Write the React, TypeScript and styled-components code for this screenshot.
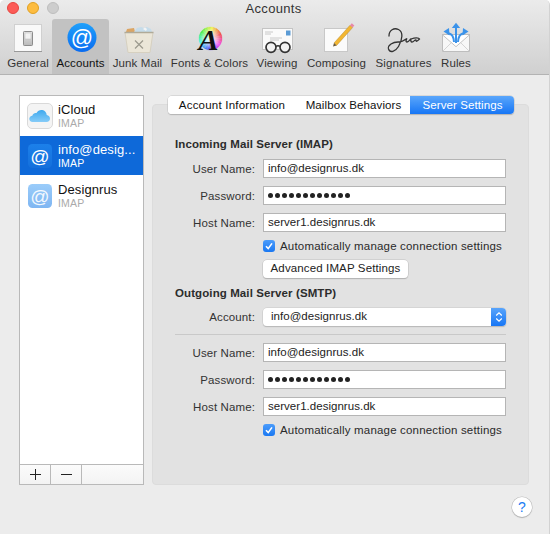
import React from "react";
import styled, { createGlobalStyle } from "styled-components";

const Global = createGlobalStyle`
  html, body { margin: 0; padding: 0; background: #fff; }
  * { box-sizing: border-box; }
`;

const Win = styled.div`
  width: 550px; height: 534px; background: #ececec; border-radius: 5px 5px 0 0;
  border-right: 1px solid #d2d2d2;
  overflow: hidden; display: flex; flex-direction: column; position: relative;
  font-family: "Liberation Sans", Arial, sans-serif; color: #222; font-size: 12px;
`;
const Chrome = styled.header`
  height: 75px; flex: none; border-bottom: 1px solid #b3b3b3;
  background: linear-gradient(#ebebeb, #d0d0d0);
  display: flex; flex-direction: column;
`;
const TitleBar = styled.div`
  height: 19px; flex: none; display: flex; align-items: center; padding-left: 7px; gap: 8px; position: relative;
`;
const Light = styled.span<{ $c: string; $b: string }>`
  width: 12px; height: 12px; border-radius: 50%; background: ${p => p.$c}; border: 1px solid ${p => p.$b};
  margin-top: -3px;
`;
const Title = styled.div`
  position: absolute; left: 0; right: 2px; top: 1px; text-align: center; font-size: 13px; color: #333; letter-spacing: .3px; line-height: 15px;
`;
const Tools = styled.nav`
  flex: 1; display: flex; padding-left: 4px;
`;
const Tool = styled.div<{ $w: number; $on?: boolean }>`
  width: ${p => p.$w}px; flex: none; display: flex; flex-direction: column; align-items: center;
  background: ${p => (p.$on ? "#c2c2c2" : "transparent")}; border-radius: 3px 3px 0 0;
  white-space: nowrap; font-size: 11.5px; letter-spacing: .1px; color: ${p => (p.$on ? "#111" : "#333")};
  svg { display: block; width: 36px; height: 36px; flex: none; }
  span { margin-top: 1px; line-height: 14px; }
`;
const Body = styled.main`
  flex: 1; display: flex; align-items: flex-start; padding: 20px 21px 0 19px; gap: 8px;
`;
const Side = styled.aside`
  width: 125px; height: 390px; flex: none; border: 1px solid #b9b9b9; background: #fff;
  display: flex; flex-direction: column;
`;
const List = styled.div`flex: 1;`;
const Acc = styled.div<{ $on?: boolean }>`
  height: 40px; display: flex; align-items: center; gap: 5px; padding-left: 7px;
  background: ${p => (p.$on ? "#0e69d9" : "transparent")}; color: ${p => (p.$on ? "#fff" : "#111")};
  box-shadow: inset 0 -1px #fff;
  svg { width: 26px; height: 26px; flex: none; display: block; }
`;
const AccText = styled.div`
  display: flex; flex-direction: column; margin-top: -1px;
  b { font-weight: 400; font-size: 13px; line-height: 15px; letter-spacing: .1px; }
  i { font-style: normal; font-size: 10.5px; line-height: 12px; letter-spacing: .2px; }
`;
const Sub = styled.i<{ $on?: boolean }>`color: ${p => (p.$on ? "#fff" : "#aaa")};`;
const SideBar = styled.div`
  height: 20px; flex: none; display: flex; border-top: 1px solid #b9b9b9;
  background: linear-gradient(#fbfbfb, #f3f3f3);
`;
const SideBtn = styled.div`
  width: 31px; flex: none; border-right: 1px solid #b9b9b9; display: flex; align-items: center; justify-content: center;
  svg { width: 11px; height: 11px; display: block; }
`;
const Panel = styled.section`
  width: 377px; height: 381px; margin-top: 9px; background: #e2e2e2; border: 1px solid #dcdcdc; border-radius: 4px;
  position: relative; padding: 32px 22px 0 22px; display: flex; flex-direction: column;
`;
const Tabs = styled.div`
  position: absolute; left: 15px; top: -9px; width: 346px; height: 18px; display: flex; background: #fff;
  border-radius: 4px; box-shadow: 0 0 0 .5px #c4c4c4, 0 1px 1px #a8a8a8; overflow: hidden;
`;
const TabBtn = styled.div<{ $w: number; $on?: boolean; $ls?: number }>`
  width: ${p => p.$w}px; flex: none; text-align: center; line-height: 18px; font-size: 11.5px; letter-spacing: ${p => p.$ls ?? 0.1}px;
  color: ${p => (p.$on ? "#fff" : "#111")};
  background: ${p => (p.$on ? "linear-gradient(#5aa6fb, #1776f5)" : "#fff")};
  & + & { border-left: 1px solid ${p => (p.$on ? "transparent" : "#e2e2e2")}; }
`;
const Head = styled.h3<{ $mt?: number }>`
  margin: ${p => p.$mt ?? 0}px 0 0; font-size: 11.5px; font-weight: 700; color: #2c2c2c; letter-spacing: .1px; line-height: 14px;
`;
const Row = styled.div<{ $mt?: number }>`
  display: grid; grid-template-columns: 80px 243px; column-gap: 8px; align-items: center; margin-top: ${p => p.$mt ?? 8}px;
`;
const Label = styled.label`
  text-align: right; font-size: 11.5px; letter-spacing: .12px; color: #333;
`;
const Field = styled.div`
  height: 19px; background: #fff; border: 1px solid #b5b5b5; padding-left: 4px;
  font-size: 11.5px; letter-spacing: .03px; color: #222; line-height: 17px; white-space: nowrap;
`;
const Dots = styled.div`
  display: flex; gap: 2px; align-items: center; height: 100%;
  span { width: 5px; height: 5px; background: #222; border-radius: 50%; flex: none; }
`;
const CheckText = styled.div`
  display: flex; align-items: center; gap: 5px; height: 14px; font-size: 11.5px; letter-spacing: .18px; color: #2a2a2a; white-space: nowrap;
`;
const Check = styled.span`
  width: 12px; height: 12px; border-radius: 3px; background: linear-gradient(#4b9cfb, #1a78f2); display: flex; align-items: center; justify-content: center;
  svg { width: 10px; height: 10px; display: block; }
`;
const Btn = styled.div`
  width: 145px; height: 18px; background: #fff; border-radius: 4px; text-align: center; line-height: 17px;
  font-size: 11.5px; letter-spacing: .13px; color: #222; box-shadow: 0 0 0 .5px #c0c0c0, 0 1px 1px #a8a8a8;
`;
const Select = styled.div`
  height: 18px; background: #fff; border-radius: 4px; box-shadow: 0 0 0 .5px #c8c8c8, 0 1px 1px #aaa; display: flex; overflow: hidden;
  font-size: 11.5px; letter-spacing: .03px; line-height: 17px; color: #222; padding-left: 8px; justify-content: space-between;
`;
const Stepper = styled.span`
  width: 15px; flex: none; background: linear-gradient(#58a4fb, #1776f5); display: flex; align-items: center; justify-content: center;
  svg { width: 8px; height: 12px; display: block; }
`;
const Rule = styled.hr`
  margin: 8px 0 0; border: 0; border-top: 1px solid #c9c9c9; width: 331px;
`;
const Help = styled.div`
  position: absolute; left: 512px; top: 497px; width: 20px; height: 20px; border-radius: 50%; background: #fff;
  box-shadow: 0 0 0 .5px #bbb, 0 1px 1px #aaa; color: #1a7cf3; text-align: center; font-size: 14px; line-height: 20px;
`;

const atFont = '"Liberation Sans", Arial, sans-serif';

const AtBadge = ({ id, from, to, dim }: { id: string; from: string; to: string; dim?: boolean }) => (
  <svg viewBox="0 0 26 26">
    <defs>
      <linearGradient id={id} x1="0" y1="0" x2="0" y2="1"><stop offset="0" stopColor={from} /><stop offset="1" stopColor={to} /></linearGradient>
    </defs>
    <rect x="1" y="1" width="24" height="24" rx="4.5" fill={`url(#${id})`} />
    <text x="13" y="19.5" textAnchor="middle" fontFamily={atFont} fontSize="19" fill="#fff" opacity={dim ? 0.9 : 1}>@</text>
  </svg>
);

const CloudBadge = () => (
  <svg viewBox="0 0 26 26">
    <defs>
      <linearGradient id="cl" x1="0" y1="0" x2="0" y2="1"><stop offset="0" stopColor="#3fa9ee" /><stop offset="1" stopColor="#86ccf8" /></linearGradient>
    </defs>
    <rect x=".5" y=".5" width="25" height="25" rx="4.5" fill="#f4f4f4" stroke="#d9d9d9" />
    <path d="M5.5 19c-2 0-3.2-1.5-3.2-3.2s1.3-3 3-3.1c.7-2.1 2.6-3.2 4.2-2.6 1.2-2.2 3.3-3.3 5.7-3 2.6.4 4.4 2.5 4.5 5 2 .2 3.3 1.7 3.3 3.6 0 1.9-1.5 3.3-3.3 3.3z" fill="url(#cl)" />
  </svg>
);

const GeneralIcon = () => (
  <svg viewBox="0 0 36 36">
    <defs>
      <linearGradient id="sw" x1="0" y1="0" x2="0" y2="1"><stop offset="0" stopColor="#e8e8e8" /><stop offset="1" stopColor="#b9b9b9" /></linearGradient>
    </defs>
    <rect x="4.5" y="5.5" width="27" height="27" fill="#f9f9f9" stroke="#d0d0d0" />
    <path d="M4 32.5h28" stroke="#999" />
    <rect x="13.5" y="12.5" width="9" height="14" rx=".8" fill="url(#sw)" stroke="#8c8c8c" />
    <rect x="15" y="14" width="6" height="6" fill="#f2f2f2" stroke="#bbb" strokeWidth=".5" />
  </svg>
);
const AccountsIcon = () => (
  <svg viewBox="0 0 36 36">
    <defs>
      <linearGradient id="ac" x1="0" y1="0" x2="0" y2="1"><stop offset="0" stopColor="#1fa0fb" /><stop offset="1" stopColor="#0a6cf0" /></linearGradient>
    </defs>
    <circle cx="19" cy="18.5" r="14.5" fill="url(#ac)" />
    <text x="19" y="26" textAnchor="middle" fontFamily={atFont} fontSize="22" fill="#fff">@</text>
  </svg>
);
const JunkIcon = () => (
  <svg viewBox="0 0 36 36">
    <path d="M6 13l1-3 7-1 1 4z" fill="#dba564" />
    <path d="M14 13l3-4 4-1 3 1 3-1 4 2 1 3z" fill="#c6dcea" />
    <path d="M23 10l2-1.5 2 1.5-1 2z" fill="#f4f4f4" />
    <path d="M5 13.5h28l-3 20H8z" fill="#ebe6d8" stroke="#d6d0c0" />
    <path d="M4.5 13.5h29" stroke="#b0aa98" strokeWidth="1.3" />
    <path d="M15 22l8 8M23 22l-8 8" stroke="#9c9a8e" strokeWidth="1.2" transform="translate(0 -.5)" />
  </svg>
);

const wedges = Array.from({ length: 24 }, (_, i) => {
  const a0 = ((i * 15 - 90) * Math.PI) / 180;
  const a1 = (((i + 1) * 15 - 90) * Math.PI) / 180;
  const r = 11.5;
  const cx = 18.5;
  const cy = 19.5;
  return {
    d: `M${cx} ${cy}L${cx + r * Math.cos(a0)} ${cy + r * Math.sin(a0)}A${r} ${r} 0 0 1 ${cx + r * Math.cos(a1)} ${cy + r * Math.sin(a1)}z`,
    fill: `hsl(${(60 - i * 15 + 360) % 360} 85% 60%)`,
  };
});

const FontsIcon = () => (
  <svg viewBox="0 0 36 36">
    <defs>
      <radialGradient id="fw"><stop offset="0" stopColor="#fff" stopOpacity="1" /><stop offset=".55" stopColor="#fff" stopOpacity=".55" /><stop offset="1" stopColor="#fff" stopOpacity="0" /></radialGradient>
    </defs>
    {wedges.map((w, i) => <path key={i} d={w.d} fill={w.fill} stroke={w.fill} strokeWidth=".3" />)}
    <circle cx="18.5" cy="19.5" r="11.5" fill="url(#fw)" />
    <text x="16.5" y="31" textAnchor="middle" fontFamily='"Liberation Serif", serif' fontStyle="italic" fontWeight="700" fontSize="30" fill="#111">A</text>
  </svg>
);
const ViewingIcon = () => (
  <svg viewBox="0 0 36 36">
    <rect x="3.5" y="9.5" width="30" height="21" fill="#fafafa" stroke="#c4c4c4" />
    <rect x="27" y="11.5" width="4.5" height="5" fill="#5b9bd5" />
    <path d="M6 13h8M6 15h6M11 19h12M11 21h9" stroke="#bdbdbd" strokeWidth=".8" />
    <circle cx="12" cy="28.3" r="5" fill="#f3f3f3" stroke="#333" strokeWidth="1.7" />
    <circle cx="26" cy="28.3" r="5" fill="#f3f3f3" stroke="#333" strokeWidth="1.7" />
    <path d="M17 27.5q2-1.6 4 0" fill="none" stroke="#333" strokeWidth="1.5" />
  </svg>
);
const ComposingIcon = () => (
  <svg viewBox="0 0 36 36">
    <rect x="5.5" y="9.5" width="23" height="23" fill="#fbfbfb" stroke="#c8c8c8" />
    <path d="M15 24L31 6.2l2.6 2.4L17.6 26.4z" fill="#f2b632" stroke="#a67c1e" strokeWidth=".4" />
    <path d="M31 6.2l1.8-2 2.6 2.4-1.8 2z" fill="#e889a8" />
    <path d="M15 24l-1 3.4 3.6-1z" fill="#6b5a3a" />
  </svg>
);
const SignatureIcon = () => (
  <svg viewBox="0 0 36 36">
    <path d="M3 17C3 11 8 8.500 12.500 10.500c5 2.500 4 10 0 17-3 5-8.500 7-10 2.500C1.500 26 7 23 12 23c4 0 7-2 9-3.500-1 1.500-1.500 3.500 0 3.500 2 0 3-3 4-3-.5 2 0 3 1 3 2 0 3-3 4-2 0 2 1 1.500 3.500-1-.5-1.500-4.500-1.500-8.500 0" fill="none" stroke="#333" strokeWidth="1.300" strokeLinecap="round" />
  </svg>
);
const RulesIcon = () => (
  <svg viewBox="0 0 36 36">
    <rect x="4.5" y="15.5" width="27" height="17" fill="#f7f7f7" stroke="#bdbdbd" />
    <path d="M4.5 32.500L14 23M31.500 32.500L22 23" stroke="#d4d4d4" />
    <path d="M4.700 16L18 27.700 31.300 16" fill="#fff" stroke="#c4c4c4" />
    <path d="M18 24V8" stroke="#3b93ea" strokeWidth="2" />
    <path d="M13.800 9L18 3.700 22.200 9z" fill="#3b93ea" />
    <path d="M16 23c-.5-6-2-8-6-9" stroke="#3b93ea" strokeWidth="2" fill="none" />
    <path d="M20 23c.5-6 2-8 6-9" stroke="#3b93ea" strokeWidth="2" fill="none" />
    <path d="M5.500 12.500L11 9l.5 7.500z" fill="#3b93ea" />
    <path d="M30.500 12.500L25 9l-.5 7.500z" fill="#3b93ea" />
  </svg>
);

const tools: { n: string; w: number; I: () => React.ReactElement; on?: boolean }[] = [
  { n: "General", w: 48, I: GeneralIcon },
  { n: "Accounts", w: 57, I: AccountsIcon, on: true },
  { n: "Junk Mail", w: 57, I: JunkIcon },
  { n: "Fonts & Colors", w: 87, I: FontsIcon },
  { n: "Viewing", w: 48, I: ViewingIcon },
  { n: "Composing", w: 71, I: ComposingIcon },
  { n: "Signatures", w: 63, I: SignatureIcon },
  { n: "Rules", w: 42, I: RulesIcon },
];

const Password = () => (
  <Dots>{Array.from({ length: 12 }, (_, i) => <span key={i} />)}</Dots>
);
const Tick = () => (
  <svg viewBox="0 0 10 10"><path d="M2 5.200L4.200 7.600 8 2.400" fill="none" stroke="#fff" strokeWidth="1.600" /></svg>
);

const Creds = () => (
  <>
    <Row><Label>User Name:</Label><Field>info@designrus.dk</Field></Row>
    <Row><Label>Password:</Label><Field><Password /></Field></Row>
    <Row><Label>Host Name:</Label><Field>server1.designrus.dk</Field></Row>
    <Row $mt={7}><span /><CheckText><Check><Tick /></Check>Automatically manage connection settings</CheckText></Row>
  </>
);

export default function App() {
  return (
    <Win>
      <Global />
      <Chrome>
        <TitleBar>
          <Light $c="#fc5b57" $b="#e5453f" />
          <Light $c="#fdbc40" $b="#dfa023" />
          <Light $c="#cdcdcd" $b="#bdbdbd" />
          <Title>Accounts</Title>
        </TitleBar>
        <Tools>
          {tools.map(t => (
            <Tool key={t.n} $w={t.w} $on={t.on}><t.I /><span>{t.n}</span></Tool>
          ))}
        </Tools>
      </Chrome>
      <Body>
        <Side>
          <List>
            <Acc><CloudBadge /><AccText><b>iCloud</b><Sub>IMAP</Sub></AccText></Acc>
            <Acc $on><AtBadge id="b1" from="#1c80ea" to="#1470dc" /><AccText><b>info@desig...</b><Sub $on>IMAP</Sub></AccText></Acc>
            <Acc><AtBadge id="b2" from="#9accfa" to="#7fb6f2" dim /><AccText><b>Designrus</b><Sub>IMAP</Sub></AccText></Acc>
          </List>
          <SideBar>
            <SideBtn><svg viewBox="0 0 11 11"><path d="M5.500 0v11M0 5.500h11" stroke="#222" strokeWidth="1" /></svg></SideBtn>
            <SideBtn><svg viewBox="0 0 11 11"><path d="M0 5.500h11" stroke="#222" strokeWidth="1" /></svg></SideBtn>
          </SideBar>
        </Side>
        <Panel>
          <Tabs>
            <TabBtn $w={128} $ls={0.22}>Account Information</TabBtn>
            <TabBtn $w={114}>Mailbox Behaviors</TabBtn>
            <TabBtn $w={104} $on>Server Settings</TabBtn>
          </Tabs>
          <Head>Incoming Mail Server (IMAP)</Head>
          <Creds />
          <Row $mt={7}><span /><Btn>Advanced IMAP Settings</Btn></Row>
          <Head $mt={8}>Outgoing Mail Server (SMTP)</Head>
          <Row>
            <Label>Account:</Label>
            <Select>info@designrus.dk<Stepper><svg viewBox="0 0 8 12"><path d="M1.200 4.500L4 1.800l2.800 2.700M1.200 7.500L4 10.200l2.800-2.700" fill="none" stroke="#fff" strokeWidth="1.200" /></svg></Stepper></Select>
          </Row>
          <Rule />
          <Creds />
        </Panel>
      </Body>
      <Help>?</Help>
    </Win>
  );
}
